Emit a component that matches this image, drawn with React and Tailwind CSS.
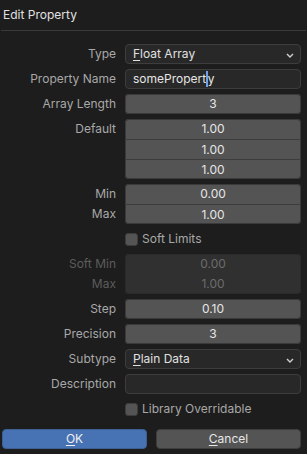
import React from "react";

const Label = ({ children, dim }) => (
  <div className={`h-5 flex items-center justify-end ${dim ? "text-[#5c5c5c]" : "text-[#a8a8a8]"}`}>
    {children}
  </div>
);

const Chevron = () => (
  <svg width="8" height="5" viewBox="0 0 8 5" className="absolute right-[6px] top-[8px]">
    <path d="M1 1 L4 4 L7 1" stroke="#d0d0d0" strokeWidth="1.4" fill="none" />
  </svg>
);

const Select = ({ first, rest }) => (
  <div className="relative h-5 rounded-[4px] bg-[#282828] border border-[#3d3d3d] flex items-center pl-[7px] text-[#e0e0e0]">
    <span>
      <span className="underline underline-offset-2">{first}</span>
      {rest}
    </span>
    <Chevron />
  </div>
);

const NumStack = ({ values, disabled }) => (
  <div
    className={`rounded-[4px] overflow-hidden ${
      disabled
        ? "shadow-[inset_0_0_0_1px_#2a2a2a] bg-[#303030] text-[#6c6c6c]"
        : "shadow-[inset_0_0_0_1px_#3a3a3a] bg-[#545454] text-[#e6e6e6]"
    }`}
  >
    {values.map((v, i) => (
      <div
        key={i}
        className={`h-5 flex items-center justify-center ${
          i > 0 && !disabled ? "border-t border-[#3d3d3d]" : ""
        }`}
      >
        {v}
      </div>
    ))}
  </div>
);

const Check = ({ label }) => (
  <div className="h-5 flex items-center gap-[4px] text-[#a8a8a8]">
    <div className="w-[13px] h-[13px] rounded-[3px] bg-[#545454] border border-[#3d3d3d]" />
    <span>{label}</span>
  </div>
);

export default function App() {
  return (
    <div
      className="w-[307px] h-[454px] bg-[#1d1d1d] text-[12px] overflow-hidden"
      style={{ fontFamily: "Inter, 'DejaVu Sans', sans-serif" }}
    >
      <div className="h-[30px] flex items-center pl-[3px] text-[#e0e0e0]">Edit Property</div>
      <div className="mx-[1px] h-px bg-[#3a3a3a]" />

      <div className="grid grid-cols-[116px_176px] gap-x-[9px] gap-y-[5px] pt-[13px]">
        <Label>Type</Label>
        <Select first="F" rest="loat Array" />

        <Label>Property Name</Label>
        <div className="h-5 rounded-[4px] bg-[#282828] border border-[#3d3d3d] flex items-center pl-[7px] text-[#e6e6e6]">
          somePropert
          <span className="inline-block w-[1.5px] h-[16px] bg-[#6fa0ea]" />
          y
        </div>

        <Label>Array Length</Label>
        <NumStack values={["3"]} />

        <div className="flex flex-col">
          <Label>Default</Label>
        </div>
        <NumStack values={["1.00", "1.00", "1.00"]} />

        <div className="flex flex-col">
          <Label>Min</Label>
          <Label>Max</Label>
        </div>
        <NumStack values={["0.00", "1.00"]} />

        <div />
        <Check label="Soft Limits" />

        <div className="flex flex-col">
          <Label dim>Soft Min</Label>
          <Label dim>Max</Label>
        </div>
        <NumStack values={["0.00", "1.00"]} disabled />

        <Label>Step</Label>
        <NumStack values={["0.10"]} />

        <Label>Precision</Label>
        <NumStack values={["3"]} />

        <Label>Subtype</Label>
        <Select first="P" rest="lain Data" />

        <Label>Description</Label>
        <div className="h-5 rounded-[4px] bg-[#282828] border border-[#3d3d3d]" />

        <div />
        <Check label="Library Overridable" />
      </div>

      <div className="flex gap-[9px] pl-[2px] pr-[6px] pt-[10px]">
        <button className="flex-1 h-5 rounded-[4px] bg-[#4772b3] border border-[#3d5f94] text-[#f0f0f0] flex items-center justify-center">
          <span><span className="underline underline-offset-2">O</span>K</span>
        </button>
        <button className="flex-1 h-5 rounded-[4px] bg-[#545454] border border-[#3d3d3d] text-[#e6e6e6] flex items-center justify-center">
          <span><span className="underline underline-offset-2">C</span>ancel</span>
        </button>
      </div>
    </div>
  );
}
